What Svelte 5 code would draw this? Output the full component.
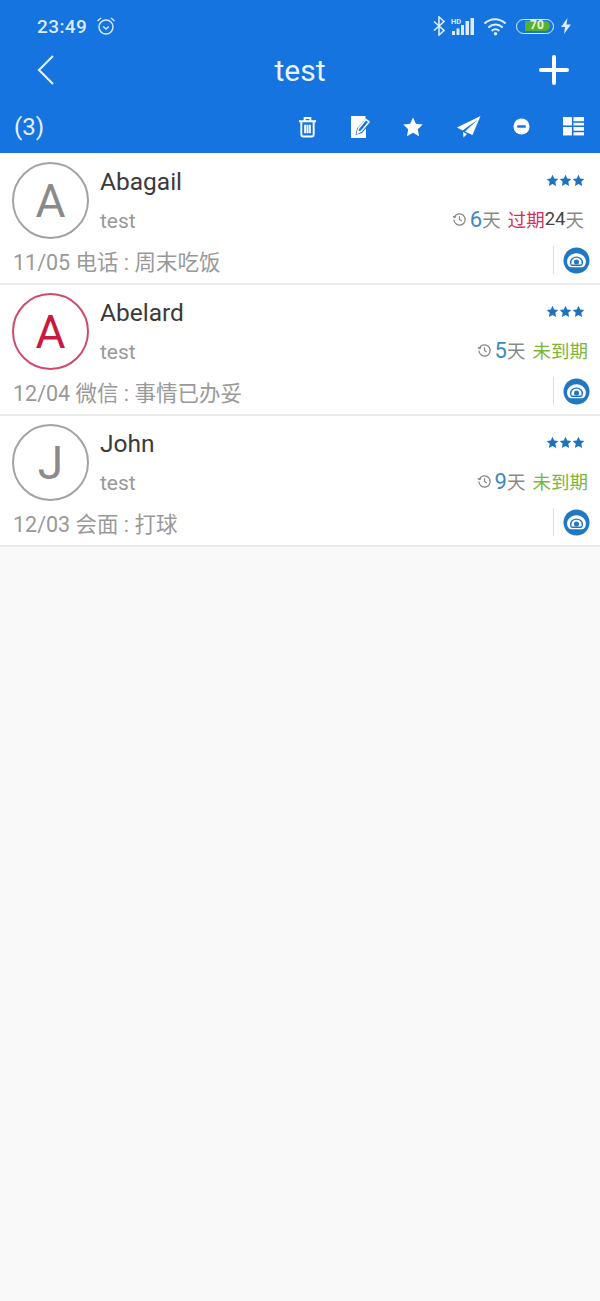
<script lang="ts">
	const contacts = [
		{ initial: 'A', name: 'Abagail', group: 'test', days: '6', status: 'overdue', overdueDays: '24', note: '11/05 电话 : 周末吃饭', hot: false },
		{ initial: 'A', name: 'Abelard', group: 'test', days: '5', status: 'pending', overdueDays: '', note: '12/04 微信 : 事情已办妥', hot: true },
		{ initial: 'J', name: 'John', group: 'test', days: '9', status: 'pending', overdueDays: '', note: '12/03 会面 : 打球', hot: false }
	];
	const star = 'M12 1.5l3.2 6.9 7.5.9-5.5 5.2 1.4 7.5L12 18.4l-6.6 3.6 1.4-7.5L1.300 9.300l7.500-.9z';
</script>

<div class="page">
	<header class="header">
		<div class="status">
			<span class="time">23:49</span>
			<svg class="alarm" viewBox="0 0 20 20" width="20" height="20" fill="none" stroke="currentColor" stroke-width="1.4">
				<circle cx="10" cy="11" r="7" />
				<path d="M7.200 10.500L10 13l2.800-2.500M1.500 5L5 2M18.500 5L15 2" />
			</svg>
			<span class="status-right">
				<svg class="bt" viewBox="0 0 12 20" width="12" height="20" fill="none" stroke="currentColor" stroke-width="1.600">
					<path d="M1 5.500l10 9-5 4.500V1l5 4.500-10 9" />
				</svg>
				<svg viewBox="0 0 24 20" width="24" height="20" fill="currentColor">
					<rect x="1" y="15" width="3" height="4" />
					<rect x="5.500" y="12.500" width="3" height="6.500" />
					<rect x="10" y="9" width="3" height="10" />
					<rect x="14.500" y="5" width="3.500" height="14" />
					<rect x="19.500" y="2" width="3.500" height="17" />
					<text x="0" y="7.500" class="hd">HD</text>
				</svg>
				<svg viewBox="0 0 26 20" width="25" height="20" fill="none" stroke="currentColor" stroke-width="2.200">
					<path d="M1.500 7.500c6.500-6 15.500-6 22 0M5.500 11.500c4.500-4 10.500-4 15 0M9 15c2.500-2 5.500-2 8 0" />
					<circle cx="13" cy="18" r="1.800" fill="currentColor" stroke="none" />
				</svg>
				<span class="battery"><span class="fill">70</span></span>
				<svg viewBox="0 0 10 16" width="10" height="16" fill="currentColor">
					<path d="M6.500 0L0 9h4l-1 7 7-9.500H5.500z" />
				</svg>
			</span>
		</div>

		<div class="titlebar">
			<svg class="back" viewBox="0 0 18 32" width="18" height="32" fill="none" stroke="currentColor" stroke-width="2.200">
				<path d="M16 2L2 16l14 14" />
			</svg>
			<h1>test</h1>
			<svg class="plus" viewBox="0 0 30 30" width="30" height="30" fill="none" stroke="currentColor" stroke-width="4" stroke-linecap="round">
				<path d="M15 2v26M2 15h26" />
			</svg>
		</div>

		<div class="toolbar">
			<span class="count">(3)</span>
			<div class="tools">
				<svg viewBox="0 0 20 22" width="19" height="22" fill="none" stroke="currentColor" stroke-width="2">
					<path d="M1 5h18M7 4V1.500h6V4M3.500 6v13a2 2 0 0 0 2 2h9a2 2 0 0 0 2-2V6M7.500 8.500v9M10 8.500v9M12.500 8.500v9" />
				</svg>
				<svg viewBox="0 0 20 24" width="20" height="24">
					<path d="M1 1h14.500v3L7 13.500 5.500 20l6.500-2 4-4.500V23H1z" fill="currentColor" />
					<path d="M7.500 18l1-4.500L16 4.500l3 2.500-7.500 9z" fill="none" stroke="currentColor" stroke-width="1.500" />
				</svg>
				<svg viewBox="0 0 24 24" width="22" height="22" fill="currentColor"><path d={star} /></svg>
				<svg viewBox="0 0 24 22" width="24" height="22" fill="currentColor">
					<path d="M23.500 0L0 11.500l5.500 3L21 3.500 8 15.500l7.500 3.500z" />
					<path d="M6 16l.5 5.500 3.500-3.500z" />
				</svg>
				<svg viewBox="0 0 18 18" width="17" height="17">
					<circle cx="9" cy="9" r="8.500" fill="currentColor" />
					<rect x="4.500" y="7.700" width="9" height="2.600" fill="#1574e0" />
				</svg>
				<svg viewBox="0 0 20 18" width="21" height="19" fill="currentColor">
					<rect x="0" y="0" width="8.500" height="8" />
					<rect x="0" y="9.500" width="8.500" height="8" />
					<rect x="10" y="0" width="10" height="4" />
					<rect x="10" y="5.500" width="10" height="2.500" />
					<rect x="10" y="9.500" width="10" height="3.500" />
					<rect x="10" y="14.500" width="10" height="3" />
				</svg>
			</div>
		</div>
	</header>

	<ul class="list">
		{#each contacts as c}
			<li class="row">
				<div class="top">
					<div class="avatar" class:hot={c.hot}>{c.initial}</div>
					<div class="info">
						<div class="line name-line">
							<span class="name">{c.name}</span>
							<span class="stars">
								{#each [1, 2, 3] as _}
									<svg viewBox="0 0 24 24" width="13" height="13" fill="currentColor"><path d={star} /></svg>
								{/each}
							</span>
						</div>
						<div class="line sub-line">
							<span class="group">{c.group}</span>
							<span class="meta" class:late={c.status === 'overdue'}>
								<svg class="history" viewBox="0 0 16 16" width="15" height="15" fill="none" stroke="currentColor" stroke-width="1.300">
									<path d="M2.500 5.500A6 6 0 1 1 2 8M1 4.500l1.500 1.500L4.500 5M8 4.500V8l2.500 1.500" />
								</svg>
								<span class="days">{c.days}</span><span>天</span>
								{#if c.status === 'overdue'}
									<span class="overdue">过期</span><span class="overdue-days">{c.overdueDays}</span><span>天</span>
								{:else}
									<span class="pending">未到期</span>
								{/if}
							</span>
						</div>
					</div>
				</div>
				<div class="bottom">
					<span class="note">{c.note}</span>
					<span class="call">
						<svg viewBox="0 0 28 28" width="27" height="27">
							<circle cx="14" cy="14" r="13.500" fill="#1f78c1" />
							<path d="M4.500 17c-1.500-6 4-10.500 9.500-10.500s11 4.500 9.500 10.500c-.5 2.500-2 4-4 4h-11c-2 0-3.500-1.500-4-4z" fill="#fff" />
							<path d="M8 17c-.5-4 2.500-6.500 6-6.500s6.500 2.500 6 6.500c-.3 1.500-1 2-2 2h-8c-1 0-1.700-.5-2-2z" fill="#fff" stroke="#1f78c1" stroke-width="1.500" />
							<circle cx="14" cy="15.500" r="2.600" fill="#1f78c1" />
						</svg>
					</span>
				</div>
			</li>
		{/each}
	</ul>
</div>

<style>
	:global(body) {
		margin: 0;
		background: #f9f9f9;
	}
	.page {
		min-height: 1301px;
		background: #f9f9f9;
		font-family: Roboto, "Noto Sans CJK SC", sans-serif;
	}
	.header {
		height: 153px;
		background: #1574e0;
		color: #fff;
		display: flex;
		flex-direction: column;
	}
	.status {
		height: 44px;
		padding: 8px 29px 0 37px;
		box-sizing: border-box;
		display: flex;
		align-items: center;
		gap: 9px;
		color: #dcecfb;
	}
	.time {
		font-size: 19px;
		font-weight: 500;
		letter-spacing: 0.4px;
	}
	.status-right {
		margin-left: auto;
		display: flex;
		align-items: center;
		gap: 8px;
	}
	.bt {
		margin-right: -2px;
	}
	.hd {
		font-size: 7.500px;
		font-weight: 700;
		font-family: Roboto, sans-serif;
	}
	.battery {
		width: 38px;
		height: 15px;
		box-sizing: border-box;
		border: 1.500px solid #e2effb;
		border-radius: 8px;
		padding: 1.500px;
		display: flex;
		margin-right: -1px;
	}
	.fill {
		width: 25px;
		margin-left: 6px;
		background: #58b030;
		border-radius: 0 5px 5px 0;
		color: #e8f6d8;
		font-size: 12px;
		line-height: 9px;
		font-weight: 700;
		text-align: center;
	}
	.titlebar {
		height: 52px;
		padding: 0 31px 0 37px;
		display: flex;
		align-items: center;
		justify-content: space-between;
	}
	.back {
		color: #e2effb;
	}
	h1 {
		margin: 0 0 0 6px;
		font-size: 30px;
		font-weight: 400;
		color: #eaf3fd;
	}
	.toolbar {
		flex: 1;
		padding: 4px 16px 0 14px;
		display: flex;
		align-items: center;
		justify-content: space-between;
	}
	.count {
		font-size: 24px;
		color: #e6f1fc;
	}
	.tools {
		display: flex;
		align-items: center;
		gap: 32.600px;
	}
	.list {
		margin: 0;
		padding: 0;
		list-style: none;
	}
	.row {
		height: 132px;
		box-sizing: border-box;
		padding: 9px 12px 0 12px;
		background: #fff;
		border-bottom: 2px solid #ebebeb;
	}
	.row + .row {
		height: 131px;
		padding-top: 8px;
	}
	.top {
		display: flex;
		gap: 11px;
	}
	.avatar {
		width: 77px;
		height: 77px;
		flex: none;
		box-sizing: border-box;
		border: 2px solid #a3a3a3;
		border-radius: 50%;
		color: #8a8a8a;
		font-size: 46px;
		line-height: 75px;
		text-align: center;
	}
	.avatar.hot {
		border-color: #cf4a6c;
		color: #c9193f;
	}
	.info {
		flex: 1;
	}
	.line {
		display: flex;
		justify-content: space-between;
	}
	.name-line {
		height: 40px;
		align-items: center;
	}
	.name {
		font-size: 24.500px;
		color: #3a3a3a;
		margin-top: -2px;
	}
	.stars {
		display: flex;
		margin: -4px 3px 0 0;
		color: #1f72bd;
	}
	.sub-line {
		height: 36px;
		margin-top: 1px;
		align-items: center;
	}
	.group {
		font-size: 21px;
		color: #999;
		margin-top: -1px;
	}
	.meta {
		display: flex;
		align-items: center;
		margin-top: -4px;
		font-size: 18.500px;
		color: #888;
	}
	.meta.late {
		margin-right: 4px;
	}
	.history {
		margin-right: 3px;
	}
	.days {
		font-size: 22px;
		color: #3f88bd;
	}
	.overdue {
		margin-left: 7px;
		color: #d0325f;
	}
	.overdue-days {
		color: #444;
	}
	.pending {
		margin-left: 7px;
		color: #7db53c;
	}
	.bottom {
		display: flex;
		align-items: center;
		justify-content: space-between;
		height: 32px;
		margin-top: 5px;
	}
	.note {
		font-size: 21.500px;
		color: #999;
		margin-left: 1px;
	}
	.call {
		display: flex;
		align-items: center;
		height: 28px;
		padding-left: 9px;
		margin-right: -2px;
		border-left: 1px solid #ddd;
	}
</style>
